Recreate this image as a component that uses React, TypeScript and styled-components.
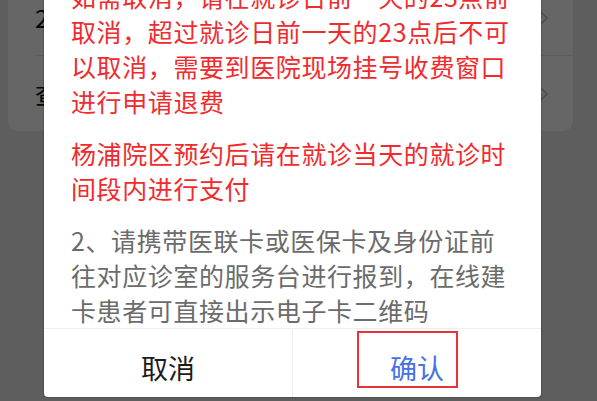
import React from 'react'
import styled, { createGlobalStyle } from 'styled-components'

const GlobalStyle = createGlobalStyle`
    html, body {
        margin: 0;
        padding: 0;
        background: #ebebeb;
        font-family: "Noto Sans CJK SC", "Noto Sans", sans-serif;
    }
`

const Page = styled.div`
    position: relative;
    width: 597px;
    height: 401px;
    overflow: hidden;
    background: #ebebeb;
`

const Card = styled.div`
    margin: -20px 0 0 8px;
    width: 565px;
    padding-left: 27px;
    box-sizing: border-box;
    background: #fff;
    border-radius: 10px;
`

const Row = styled.div`
    display: flex;
    align-items: center;
    justify-content: space-between;
    height: 75px;
    padding-right: 25px;
    font-size: 24px;
    color: #111;
    & + & {
        border-top: 1px solid #e6e6e6;
    }
`

const Overlay = styled.div`
    position: absolute;
    inset: 0;
    background: rgba(0, 0, 0, 0.6);
`

const Modal = styled.div`
    position: absolute;
    left: 44px;
    bottom: 4px;
    width: 497px;
    background: #fff;
    border-radius: 4px;
    box-shadow: 0 0 2px rgba(0, 0, 0, 0.5);
    display: flex;
    flex-direction: column;
`

const Body = styled.div`
    padding: 0 25px 0 27px;
`

const Para = styled.p<{ $tone: 'red' | 'grey' }>`
    margin: 0;
    font-size: 25px;
    line-height: 35px;
    letter-spacing: 0.6px;
    color: ${p => p.$tone === 'red' ? '#f02b2e' : '#6b6b6b'};
    & + & {
        margin-top: 17px;
    }
`

const Footer = styled.div`
    display: flex;
    height: 68px;
    border-top: 1px solid #eeeeee;
`

const Button = styled.div<{ $primary?: boolean }>`
    position: relative;
    flex: 1;
    display: flex;
    align-items: center;
    justify-content: center;
    padding-top: 8px;
    font-size: 27px;
    color: ${p => p.$primary ? '#4670e6' : '#1c1c1c'};
    & + & {
        border-left: 1px solid #eeeeee;
    }
`

// red annotation frame drawn over the confirm button
const Highlight = styled.span`
    position: absolute;
    left: 64px;
    top: 2px;
    width: 101px;
    height: 57px;
    box-sizing: border-box;
    border: 2px solid #e8333a;
`

const Chevron = () => (
    <svg width="9" height="16" viewBox="0 0 9 16">
        <polyline points="1,1 8,8 1,15" fill="none" stroke="#c4c4c4" strokeWidth="1.6" />
    </svg>
)

export default function App() {
    return (
        <Page>
            <GlobalStyle />
            <Card>
                <Row>2021-06-18 上午 <Chevron /></Row>
                <Row>查看就诊须知 <Chevron /></Row>
            </Card>
            <Overlay />
            <Modal>
                <Body>
                    <Para $tone="red">
                        如需取消，请在就诊日前一天的23点前取消，超过就诊日前一天的23点后不可以取消，需要到医院现场挂号收费窗口进行申请退费
                    </Para>
                    <Para $tone="red">
                        杨浦院区预约后请在就诊当天的就诊时间段内进行支付
                    </Para>
                    <Para $tone="grey">
                        2、请携带医联卡或医保卡及身份证前往对应诊室的服务台进行报到，在线建卡患者可直接出示电子卡二维码
                    </Para>
                </Body>
                <Footer>
                    <Button>取消</Button>
                    <Button $primary>
                        确认
                        <Highlight />
                    </Button>
                </Footer>
            </Modal>
        </Page>
    )
}
